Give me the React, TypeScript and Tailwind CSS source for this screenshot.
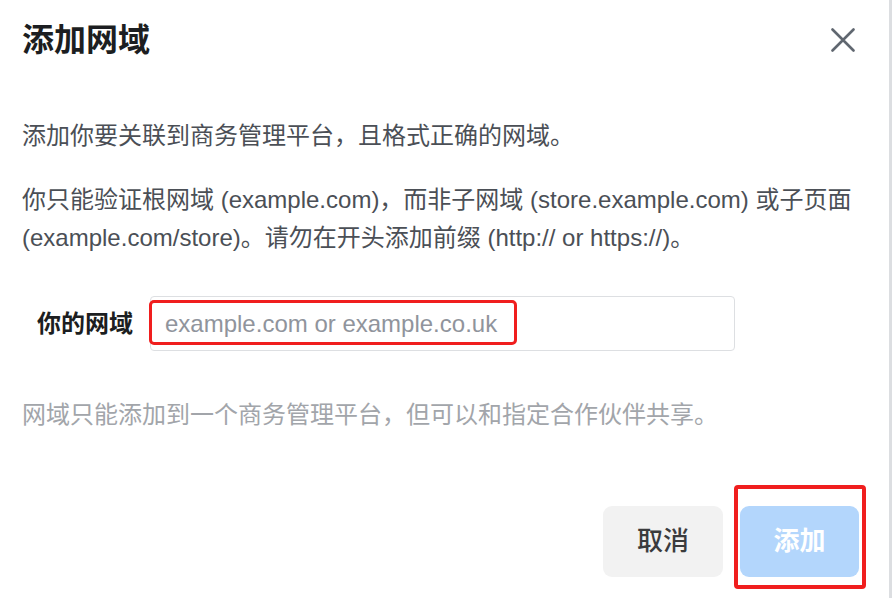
export default function App() {
  const font = "font-['Liberation_Sans','Noto_Sans_CJK_SC',sans-serif]";

  return (
    <div
      className={`${font} w-[892px] h-[598px] bg-white border-r-[3px] border-[#dcdee1] flex flex-col overflow-hidden`}
    >
      {/* header */}
      <div className="flex items-center justify-between pl-[22px] pr-[34px] pt-[20px]">
        <h1 className="text-[32px] leading-[40px] font-semibold text-[#1c1e21]">添加网域</h1>
        <button className="w-[24px] h-[24px] flex items-center justify-center">
          <svg width="24" height="24" viewBox="0 0 24 24" fill="none">
            <path
              d="M1.5 1.5 L22.5 22.5 M22.5 1.5 L1.5 22.5"
              stroke="#606770"
              strokeWidth="2.6"
              strokeLinecap="round"
            />
          </svg>
        </button>
      </div>

      {/* body */}
      <div className="px-[22px] text-[24px] leading-[38px] text-[#4b4f56]">
        <p className="mt-[57px]">添加你要关联到商务管理平台，且格式正确的网域。</p>
        <p className="mt-[26px]">
          你只能验证根网域 (example.com)，而非子网域 (store.example.com) 或子页面
          (example.com/store)。请勿在开头添加前缀 (http:// or https://)。
        </p>
      </div>

      {/* field */}
      <div className="flex items-center mt-[39px] pl-[22px]">
        <label className="w-[111px] text-right text-[24px] font-bold text-[#1c1e21]">你的网域</label>
        <div className="relative ml-[17px]">
          <input
            className="w-[585px] h-[55px] border border-[#dddfe2] rounded-[4px] pl-[14px] text-[24px] outline-none placeholder:text-[#90949c]"
            placeholder="example.com or example.co.uk"
          />
          <div className="absolute left-[-1px] top-[4px] w-[368px] h-[45px] border-[3px] border-[#f01e1e] rounded-[5px] pointer-events-none" />
        </div>
      </div>

      <p className="mt-[45px] px-[22px] text-[24px] leading-[38px] text-[#a2a5aa]">
        网域只能添加到一个商务管理平台，但可以和指定合作伙伴共享。
      </p>

      {/* footer */}
      <div className="flex justify-end gap-[17px] mt-[72px] pr-[30px]">
        <button className="w-[120px] h-[71px] rounded-[9px] bg-[#f2f2f2] text-[26px] font-medium text-[#3a3b3d]">
          取消
        </button>
        <div className="relative">
          <button className="w-[119px] h-[71px] rounded-[9px] bg-[#b3d6fc] text-[26px] font-bold text-white">
            添加
          </button>
          <div className="absolute left-[-6px] right-[-7px] top-[-21px] bottom-[-12px] border-[4px] border-[#f01e1e] rounded-[4px] pointer-events-none" />
        </div>
      </div>
    </div>
  );
}
